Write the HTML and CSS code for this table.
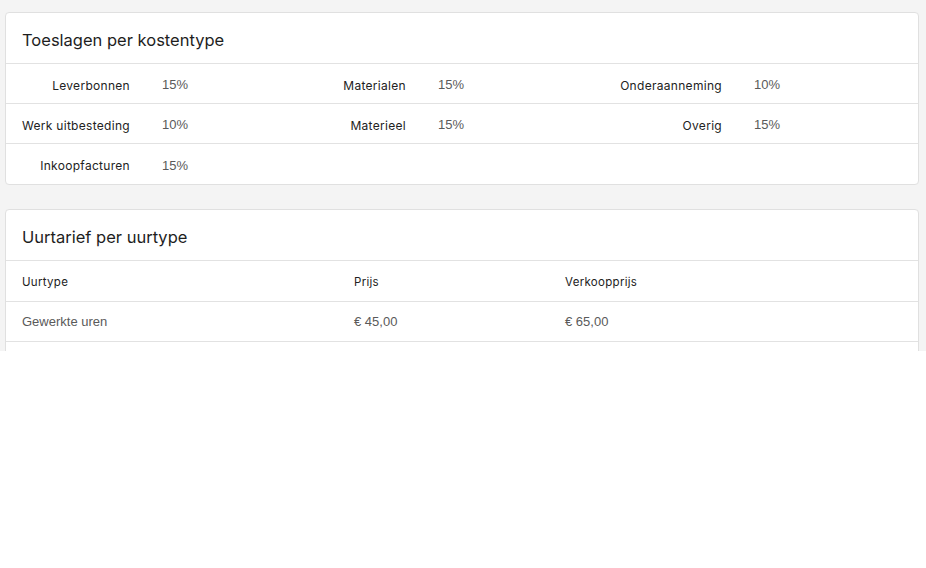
FILE: index.html
```html
<!DOCTYPE html>
<html>
	<head>
		<meta charset="UTF-8">
		<title>Instellingen tarieven</title>
		<link rel="stylesheet" href="styles.css">
	</head>
	<body>
		<main class="page">
			<section class="card">
				<h2 class="card-title">Toeslagen per kostentype</h2>
				<div class="surcharge-row">
					<span class="label">Leverbonnen</span><span class="value">15%</span>
					<span class="label">Materialen</span><span class="value">15%</span>
					<span class="label">Onderaanneming</span><span class="value">10%</span>
				</div>
				<div class="surcharge-row">
					<span class="label">Werk uitbesteding</span><span class="value">10%</span>
					<span class="label">Materieel</span><span class="value">15%</span>
					<span class="label">Overig</span><span class="value">15%</span>
				</div>
				<div class="surcharge-row">
					<span class="label">Inkoopfacturen</span><span class="value">15%</span>
				</div>
			</section>

			<section class="card">
				<h2 class="card-title">Uurtarief per uurtype</h2>
				<div class="rate-row rate-head">
					<span>Uurtype</span><span>Prijs</span><span>Verkoopprijs</span>
				</div>
				<div class="rate-row">
					<span>Gewerkte uren</span><span>€ 45,00</span><span>€ 65,00</span>
				</div>
				<div class="rate-row"></div>
			</section>
		</main>
	</body>
</html>
```
FILE: styles.css
```css
html, body {
	margin: 0;
	background: #fff;
}
.page {
	height: 351px;
	overflow: hidden;
	box-sizing: border-box;
	background: #f4f4f4;
	padding: 12px 7px 0 5px;
	display: flex;
	flex-direction: column;
	gap: 24px;
}
.card {
	background: #fff;
	border: 1px solid #e0e0e0;
	border-radius: 4px;
	flex-shrink: 0;
}
.card-title {
	margin: 0;
	height: 50px;
	line-height: 54px;
	padding: 0 16px;
	font-family: Inter, "Noto Sans", sans-serif;
	font-size: 16.5px;
	font-weight: 400;
	color: #1e1e1e;
	border-bottom: 1px solid #e2e2e2;
}
.surcharge-row {
	display: grid;
	grid-template-columns: 140px 136px 140px 136px 180px 180px;
	height: 40px;
	box-sizing: border-box;
	align-items: center;
	border-bottom: 1px solid #e2e2e2;
}
.surcharge-row:last-child {
	border-bottom: none;
}
.label {
	text-align: right;
	padding: 3px 16px 0 0;
	font-family: Inter, "Noto Sans", sans-serif;
	font-size: 12px;
	letter-spacing: 0.3px;
	color: #222;
}
.value {
	padding: 2px 0 0 16px;
	font-family: "Liberation Sans", Arial, sans-serif;
	font-size: 13px;
	color: #5a5a5a;
}
.rate-row {
	display: grid;
	grid-template-columns: 332px 211px 1fr;
	height: 40px;
	box-sizing: border-box;
	align-items: center;
	padding-left: 16px;
	border-bottom: 1px solid #e2e2e2;
	font-family: "Liberation Sans", Arial, sans-serif;
	font-size: 13px;
	color: #5a5a5a;
}
.rate-head {
	height: 41px;
	padding-top: 2px;
	font-family: Inter, "Noto Sans", sans-serif;
	font-size: 11.5px;
	letter-spacing: 0.3px;
	color: #222;
}
```
